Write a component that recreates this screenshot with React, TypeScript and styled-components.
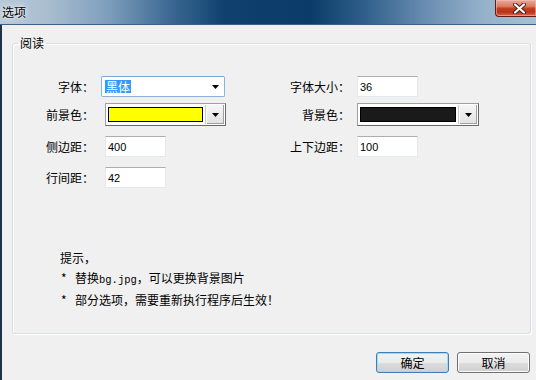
import React from "react";
import styled, { createGlobalStyle } from "styled-components";

const Global = createGlobalStyle`
  html, body { margin: 0; padding: 0; background: #f0f0f0; }
  body {
    width: 536px; height: 380px; overflow: hidden;
    font-family: "Noto Sans CJK SC", "Liberation Sans", sans-serif;
    font-size: 12px; color: #000;
  }
`;

const Window = styled.div`
  width: 536px;
  height: 380px;
  display: flex;
  flex-direction: column;
  background: #f0f0f0;
  overflow: hidden;
`;

const TitleBar = styled.div`
  height: 24px;
  flex: none;
  display: flex;
  justify-content: space-between;
  align-items: flex-start;
  background: linear-gradient(
    90deg,
    #b9cad9 0%,
    #a9bdcf 9%,
    #7f9fbd 20%,
    #3a6892 32%,
    #0f406e 42%,
    #0b3b68 58%,
    #2f5f8a 68%,
    #6c90b2 80%,
    #95b1ca 90%,
    #a8bfd3 100%
  );
  border-bottom: 1px solid #3e6185;
`;

const Title = styled.div`
  padding-left: 2px;
  line-height: 24px;
  font-size: 12px;
  color: #000;
  text-shadow: 0 0 6px #fff, 0 0 3px #fff;
`;

const CloseButton = styled.div`
  width: 41px;
  height: 17px;
  box-sizing: border-box;
  padding-left: 6px;
  display: flex;
  align-items: center;
  justify-content: center;
  border: 1px solid #5a1f15;
  border-top: none;
  border-right: none;
  border-radius: 0 0 0 4px;
  background: linear-gradient(
    180deg,
    #e9a898 0%,
    #d97b64 40%,
    #c4401f 52%,
    #b8321a 75%,
    #d8694c 100%
  );
  box-shadow: inset 0 0 0 1px rgba(255, 200, 190, 0.5);
`;

const Client = styled.div`
  flex: 1;
  display: flex;
  flex-direction: column;
  border-left: 2px solid #1e3348;
`;

const Group = styled.fieldset`
  margin: 12px 0 0 10px;
  width: 519px;
  height: 297px;
  box-sizing: border-box;
  padding: 0;
  min-width: 0;
  border: 1px solid #d5dfe5;
  border-radius: 3px;
  box-shadow: inset 1px 1px 0 #fff, 1px 1px 0 #fff;
`;

const Legend = styled.legend`
  margin-left: 5px;
  padding: 0 2px;
  font-size: 12px;
  line-height: 12px;
`;

const Form = styled.div`
  margin-top: 27px;
  display: flex;
  flex-direction: column;
`;

const Row = styled.div<{ $h: number; $mt: number }>`
  display: grid;
  grid-template-columns: 81px 196px 60px auto;
  align-items: center;
  height: ${(p) => p.$h}px;
  margin-top: ${(p) => p.$mt}px;
`;

const Label = styled.div`
  text-align: right;
  white-space: nowrap;
  line-height: 14px;
`;

const FontCombo = styled.div<{ $ml: number }>`
  margin-left: ${(p) => p.$ml}px;
  width: 124px;
  height: 21px;
  box-sizing: border-box;
  display: flex;
  align-items: center;
  background: #fff;
  border: 1px solid #8db2d6;
  border-top-color: #7ea6cf;
  border-radius: 2px;
`;

const Selected = styled.span`
  margin-left: 3px;
  padding: 0 1px;
  height: 13px;
  line-height: 13px;
  background: #3399ff;
  color: #fff;
`;

const Arrow = styled.svg`
  margin-left: auto;
  margin-right: 5px;
  flex: none;
`;

const ColorCombo = styled.div<{ $ml: number; $w: number }>`
  margin-left: ${(p) => p.$ml}px;
  width: ${(p) => p.$w}px;
  height: 23px;
  box-sizing: border-box;
  display: flex;
  align-items: center;
  background: #fff;
  border: 1px solid;
  border-color: #a0a0a0 #696969 #696969 #a0a0a0;
  padding-left: 2px;
`;

const Swatch = styled.div<{ $color: string }>`
  flex: 1;
  height: 15px;
  box-sizing: border-box;
  border: 1px solid #000;
  background: ${(p) => p.$color};
`;

const DropButton = styled.div`
  width: 18px;
  height: 19px;
  margin: 0 1px 0 3px;
  box-sizing: border-box;
  display: flex;
  align-items: center;
  justify-content: center;
  background: linear-gradient(180deg, #f6f6f6, #e2e2e2);
  border-left: 1px solid #fff;
  box-shadow: inset -1px -1px 0 #a0a0a0, -1px 0 0 #c8c8c8;
`;

const TextBox = styled.input<{ $ml: number }>`
  margin-left: ${(p) => p.$ml}px;
  width: 61px;
  height: 21px;
  box-sizing: border-box;
  border: 1px solid #e3e9ef;
  border-top-color: #abadb3;
  padding: 0 2px;
  background: #fff;
  font-family: "Liberation Sans", "Noto Sans CJK SC", sans-serif;
  font-size: 11px;
  color: #000;
  outline: none;
`;

const Hint = styled.div`
  margin: 60px 0 0 47px;
  line-height: 19.5px;
`;

const Star = styled.span`
  display: inline-block;
  width: 15px;
  padding-left: 1px;
  box-sizing: border-box;
`;

const Mono = styled.span`
  font-family: "Liberation Mono", monospace;
  font-size: 10.5px;
`;

const ButtonRow = styled.div`
  display: flex;
  justify-content: flex-end;
  gap: 8px;
  margin-top: 18px;
  padding-right: 6px;
`;

const Button = styled.div<{ $default?: boolean }>`
  width: 73px;
  height: 21px;
  box-sizing: border-box;
  display: flex;
  align-items: center;
  justify-content: center;
  border: 1px solid ${(p) => (p.$default ? "#3c7fb1" : "#707070")};
  border-radius: 3px;
  background: linear-gradient(180deg, #f2f2f2 0%, #ebebeb 50%, #dddddd 50%, #cfcfcf 100%);
  box-shadow: inset 0 0 0 1px ${(p) => (p.$default ? "#9fdcf4" : "#fcfcfc")};
  font-size: 12px;
`;

const DownArrow = () => (
  <Arrow width="7" height="4" viewBox="0 0 7 4">
    <polygon points="0,0 7,0 3.5,4" fill="#000" />
  </Arrow>
);

const SmallArrow = () => (
  <svg width="7" height="4" viewBox="0 0 7 4">
    <polygon points="0,0 7,0 3.5,4" fill="#000" />
  </svg>
);

export default function App() {
  return (
    <>
      <Global />
      <Window>
        <TitleBar>
          <Title>选项</Title>
          <CloseButton>
            <svg width="13" height="11" viewBox="0 0 13 11">
              <path d="M2 1.5 L11 9.5 M11 1.5 L2 9.5" stroke="#4a1a10" strokeWidth="4" strokeLinecap="round" />
              <path d="M2 1.5 L11 9.5 M11 1.5 L2 9.5" stroke="#fff" strokeWidth="2.2" strokeLinecap="round" />
            </svg>
          </CloseButton>
        </TitleBar>
        <Client>
          <Group>
            <Legend>阅读</Legend>
            <Form>
              <Row $h={21} $mt={0}>
                <Label>字体：</Label>
                <FontCombo $ml={7}>
                  <Selected>黑体</Selected>
                  <DownArrow />
                </FontCombo>
                <Label>字体大小：</Label>
                <TextBox $ml={7} readOnly value="36" />
              </Row>
              <Row $h={23} $mt={6}>
                <Label>前景色：</Label>
                <ColorCombo $ml={11} $w={121}>
                  <Swatch $color="#ffff00" />
                  <DropButton>
                    <SmallArrow />
                  </DropButton>
                </ColorCombo>
                <Label>背景色：</Label>
                <ColorCombo $ml={7} $w={122}>
                  <Swatch $color="#1a1a1a" />
                  <DropButton>
                    <SmallArrow />
                  </DropButton>
                </ColorCombo>
              </Row>
              <Row $h={21} $mt={10}>
                <Label>侧边距：</Label>
                <TextBox $ml={11} readOnly value="400" />
                <Label>上下边距：</Label>
                <TextBox $ml={7} readOnly value="100" />
              </Row>
              <Row $h={21} $mt={10}>
                <Label>行间距：</Label>
                <TextBox $ml={11} readOnly value="42" />
              </Row>
            </Form>
            <Hint>
              <div>提示，</div>
              <div>
                <Star>*</Star>替换<Mono>bg.jpg</Mono>，可以更换背景图片
              </div>
              <div>
                <Star>*</Star>部分选项，需要重新执行程序后生效！
              </div>
            </Hint>
          </Group>
          <ButtonRow>
            <Button $default>确定</Button>
            <Button>取消</Button>
          </ButtonRow>
        </Client>
      </Window>
    </>
  );
}
